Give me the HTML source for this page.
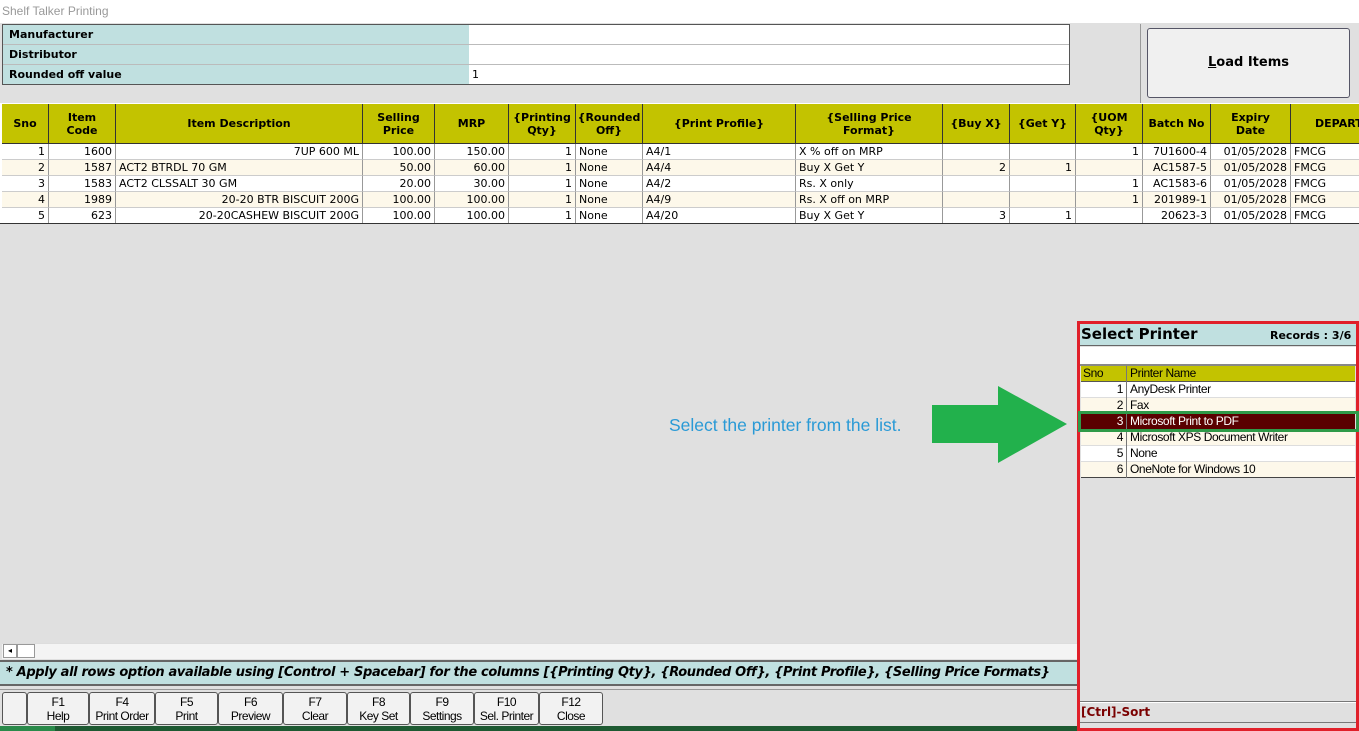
<!DOCTYPE html>
<html><head><meta charset="utf-8"><style>
*{box-sizing:border-box;margin:0;padding:0}
body{width:1359px;height:731px;position:relative;overflow:hidden;background:#e0e0e0;font-family:"DejaVu Sans","Liberation Sans",sans-serif;font-size:11px;color:#000}
.a{position:absolute}
.hd{position:absolute;top:104px;height:40px;background:#c3c300;border-right:1px solid #333;border-bottom:1px solid #333;font-weight:bold;font-size:11px;display:flex;align-items:center;justify-content:center;text-align:center;line-height:13px}
.c{position:absolute;height:16px;line-height:15px;border-right:1px solid #999;border-bottom:1px solid #ccc;padding:0 3px;white-space:nowrap;overflow:hidden;font-size:11px}
.r{text-align:right}
.fk{position:absolute;top:692px;height:33px;border:1px solid #555;border-radius:3px;background:#f2f2f2;text-align:center;font-family:"Liberation Sans",sans-serif;font-size:12px;line-height:14px;padding-top:2px;letter-spacing:-0.5px}
.pr{position:absolute;left:1081px;width:274px;height:16px;line-height:15px;border-bottom:1px solid #ddd;font-family:"Liberation Sans",sans-serif;font-size:12px;letter-spacing:-0.4px}
.pr span{display:inline-block;width:46px;text-align:right;padding-right:3px;border-right:1px solid #777;height:16px}
.pr b{font-weight:normal;padding-left:3px}
</style></head><body>
<div class="a" style="left:0;top:0;width:1359px;height:23px;background:#fff"></div>
<div class="a" style="left:2px;top:4px;color:#999;font-family:'Liberation Sans',sans-serif;font-size:12px">Shelf Talker Printing</div>

<div class="a" style="left:2px;top:24px;width:1068px;height:61px;border:1px solid #555;background:#fff"></div>
<div class="a" style="left:3px;top:25px;width:466px;height:59px;background:#c0e0e0"></div>
<div class="a" style="left:3px;top:44px;width:1066px;height:1px;background:#bbb"></div>
<div class="a" style="left:3px;top:64px;width:1066px;height:1px;background:#bbb"></div>
<div class="a" style="left:9px;top:28px;font-weight:bold">Manufacturer</div>
<div class="a" style="left:9px;top:48px;font-weight:bold">Distributor</div>
<div class="a" style="left:9px;top:68px;font-weight:bold">Rounded off value</div>
<div class="a" style="left:472px;top:68px">1</div>
<div class="a" style="left:1140px;top:24px;width:1px;height:80px;background:#999"></div>
<div class="a" style="left:1147px;top:28px;width:203px;height:70px;border:1px solid #556;border-radius:3px;background:#f0f0f0;font-weight:bold;font-size:13px;text-align:center;line-height:68px"><u>L</u>oad Items</div>

<div class="a" style="left:0;top:103px;width:1359px;height:121px;background:#fff"></div>
<div class="hd" style="left:2px;width:47px">Sno</div>
<div class="hd" style="left:49px;width:67px">Item<br>Code</div>
<div class="hd" style="left:116px;width:247px">Item Description</div>
<div class="hd" style="left:363px;width:72px">Selling<br>Price</div>
<div class="hd" style="left:435px;width:74px">MRP</div>
<div class="hd" style="left:509px;width:67px">{Printing<br>Qty}</div>
<div class="hd" style="left:576px;width:67px">{Rounded<br>Off}</div>
<div class="hd" style="left:643px;width:153px">{Print Profile}</div>
<div class="hd" style="left:796px;width:147px">{Selling Price<br>Format}</div>
<div class="hd" style="left:943px;width:67px">{Buy X}</div>
<div class="hd" style="left:1010px;width:66px">{Get Y}</div>
<div class="hd" style="left:1076px;width:67px">{UOM<br>Qty}</div>
<div class="hd" style="left:1143px;width:68px">Batch No</div>
<div class="hd" style="left:1211px;width:80px">Expiry<br>Date</div>
<div class="hd" style="left:1291px;width:80px;justify-content:flex-start;padding-left:24px">DEPART</div>
<div id="rows"></div>
<div class="a" style="left:0;top:223px;width:1359px;height:1px;background:#333"></div>

<div class="a" style="left:2px;top:643px;width:1075px;height:16px;background:#f4f4f4;border-top:1px solid #ddd"></div>
<div class="a" style="left:3px;top:644px;width:14px;height:14px;border:1px solid #999;background:#fff;font-size:8px;line-height:12px;text-align:center">◂</div>
<div class="a" style="left:17px;top:644px;width:18px;height:14px;border:1px solid #999;background:#fff"></div>
<div class="a" style="left:0;top:660px;width:1077px;height:26px;background:#c0e0e0;border-top:2px solid #666;border-bottom:2px solid #666;font-weight:bold;font-style:italic;font-size:13px;line-height:21px;padding-left:6px;white-space:nowrap;overflow:hidden;letter-spacing:-0.35px">* Apply all rows option available using [Control + Spacebar] for the columns [{Printing Qty}, {Rounded Off}, {Print Profile}, {Selling Price Formats}</div>
<div class="a" style="left:0;top:689px;width:1359px;height:1px;background:#999"></div>
<div class="fk" style="left:2px;width:25px"></div>
<div class="fk" style="left:27px;width:62px">F1<br>Help</div>
<div class="fk" style="left:89px;width:66px">F4<br>Print Order</div>
<div class="fk" style="left:155px;width:63px">F5<br>Print</div>
<div class="fk" style="left:218px;width:65px">F6<br>Preview</div>
<div class="fk" style="left:283px;width:64px">F7<br>Clear</div>
<div class="fk" style="left:347px;width:63px">F8<br>Key Set</div>
<div class="fk" style="left:410px;width:64px">F9<br>Settings</div>
<div class="fk" style="left:474px;width:65px">F10<br>Sel. Printer</div>
<div class="fk" style="left:539px;width:64px">F12<br>Close</div>
<div class="a" style="left:0;top:726px;width:1359px;height:5px;background:#1e5a32"></div>
<div class="a" style="left:0;top:726px;width:55px;height:5px;background:#2a8a4a"></div>

<div class="a" style="left:669px;top:415px;color:#2a9ad6;font-family:'Liberation Sans',sans-serif;font-size:17.5px">Select the printer from the list.</div>
<svg class="a" style="left:930px;top:384px" width="140" height="80"><polygon points="2,21 68,21 68,2 137,40 68,79 68,59 2,59" fill="#22b14c"/></svg>

<div class="a" style="left:1077px;top:321px;width:282px;height:410px;border:3px solid #e0202a;background:#e0e0e0"></div>
<div class="a" style="left:1080px;top:324px;width:276px;height:22px;background:#c0e0e0;border-bottom:1px solid #666"></div>
<div class="a" style="left:1081px;top:325px;font-weight:bold;font-size:15px">Select Printer</div>
<div class="a" style="left:1270px;top:329px;font-weight:bold;font-size:11px;white-space:nowrap">Records : 3/6</div>
<div class="a" style="left:1080px;top:347px;width:276px;height:17px;background:#fff"></div>
<div class="a" style="left:1080px;top:364px;width:276px;height:2px;background:#888"></div>
<div class="pr" style="top:366px;background:#c3c300;border-bottom:1px solid #555"><span style="text-align:left;padding-left:2px">Sno</span><b>Printer Name</b></div>
<div class="pr" style="top:382px;background:#fff"><span>1</span><b>AnyDesk Printer</b></div>
<div class="pr" style="top:398px;background:#fdf8ea"><span>2</span><b>Fax</b></div>
<div class="pr" style="top:414px;background:#5a0000;color:#fff"><span>3</span><b>Microsoft Print to PDF</b></div>
<div class="pr" style="top:430px;background:#fdf8ea"><span>4</span><b>Microsoft XPS Document Writer</b></div>
<div class="pr" style="top:446px;background:#fff"><span>5</span><b>None</b></div>
<div class="pr" style="top:462px;background:#fdf8ea;border-bottom:1px solid #444"><span>6</span><b>OneNote for Windows 10</b></div>
<div class="a" style="left:1078px;top:411px;width:281px;height:21px;border:3px solid #2e9a48"></div>
<div class="a" style="left:1080px;top:701px;width:276px;height:2px;border-top:1px solid #777;border-bottom:1px solid #fff"></div>
<div class="a" style="left:1081px;top:705px;color:#7a0000;font-weight:bold;font-size:12px">[Ctrl]-Sort</div>
<div class="a" style="left:1080px;top:722px;width:276px;height:1px;background:#777"></div>

<script>
var cols=[2,49,116,363,435,509,576,643,796,943,1010,1076,1143,1211,1291,1371];
var al=[1,1,1,1,1,1,0,0,0,1,1,1,1,1,0];
var data=[
["1","1600","7UP 600 ML","100.00","150.00","1","None","A4/1","X % off on MRP","","","1","7U1600-4","01/05/2028","FMCG"],
["2","1587","ACT2 BTRDL 70 GM","50.00","60.00","1","None","A4/4","Buy X Get Y","2","1","","AC1587-5","01/05/2028","FMCG"],
["3","1583","ACT2 CLSSALT 30 GM","20.00","30.00","1","None","A4/2","Rs. X only","","","1","AC1583-6","01/05/2028","FMCG"],
["4","1989","20-20 BTR BISCUIT 200G","100.00","100.00","1","None","A4/9","Rs. X off on MRP","","","1","201989-1","01/05/2028","FMCG"],
["5","623","20-20CASHEW BISCUIT 200G","100.00","100.00","1","None","A4/20","Buy X Get Y","3","1","","20623-3","01/05/2028","FMCG"]];
var h="";
data.forEach(function(r,i){var bg=i%2?"#fdf8ea":"#fff";r.forEach(function(v,j){var a=al[j];if(j==2)a=(i==1||i==2)?0:1;
h+='<div class="c'+(a?' r':'')+'" style="top:'+(144+i*16)+'px;left:'+cols[j]+'px;width:'+(cols[j+1]-cols[j])+'px;background:'+bg+'">'+v+'</div>';});});
document.getElementById("rows").innerHTML=h;
</script>
</body></html>
